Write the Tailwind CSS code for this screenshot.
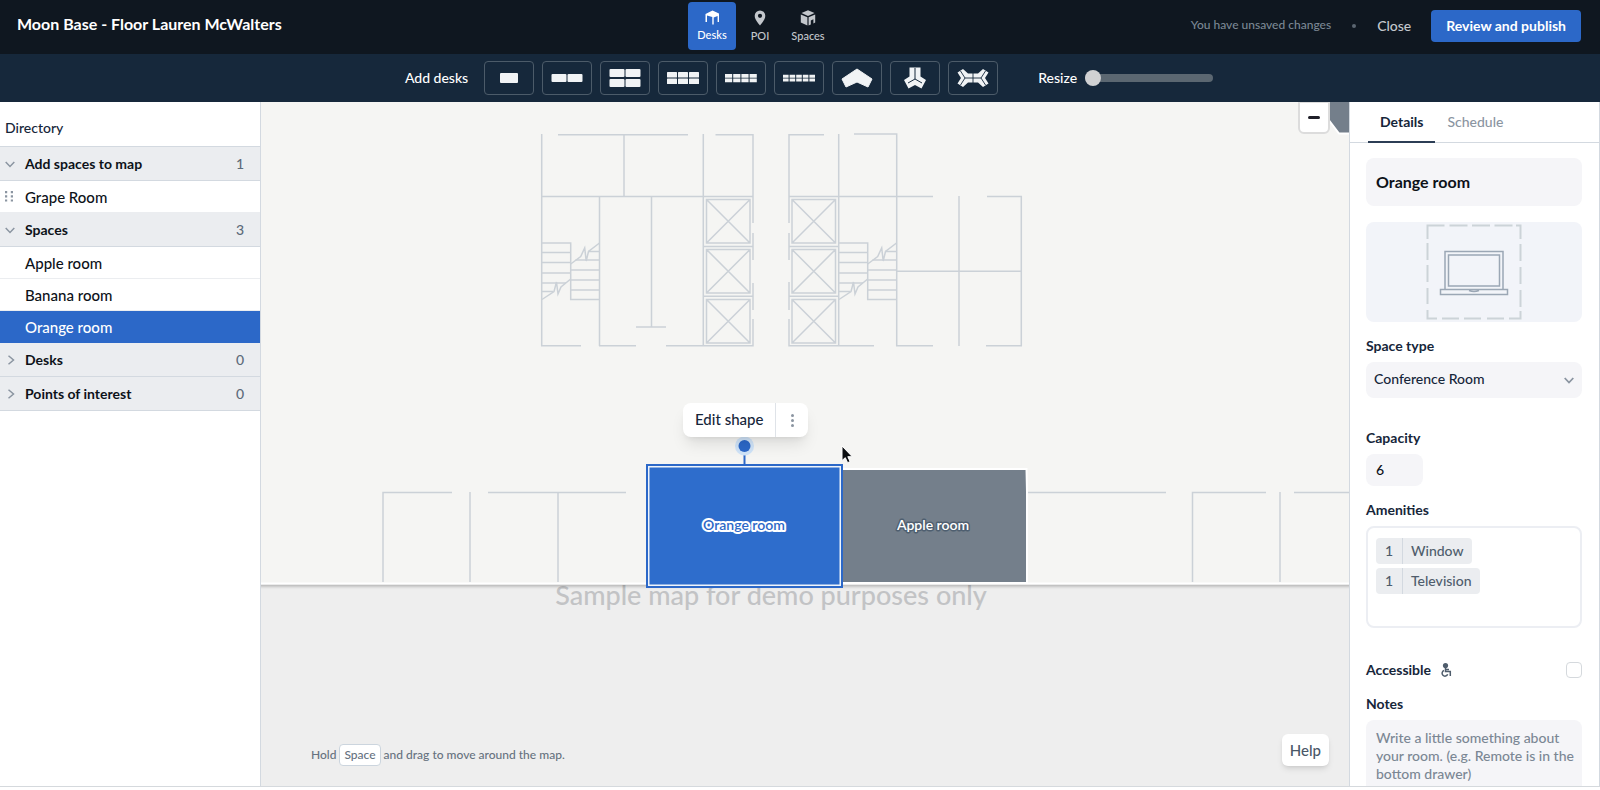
<!DOCTYPE html>
<html lang="en">
<head>
  <meta charset="UTF-8">
  <meta name="viewport" content="width=device-width, initial-scale=1">
  <title>Moon Base - Map editor</title>
  <script src="https://cdn.jsdelivr.net/npm/@tailwindcss/browser@4"></script>
</head>
<body class="h-screen flex flex-col overflow-hidden bg-white pb-[3px] font-['Lato',sans-serif] font-medium text-sm leading-5 text-[#16263a]">

<!-- Top bar -->
<header class="h-[54px] shrink-0 flex items-center bg-[#0f1720] text-white">
  <h1 class="w-[43%] pl-[17px] pb-1.5 text-base font-bold">Moon Base - Floor Lauren McWalters</h1>
  <nav class="flex pb-0.5 text-[11px] leading-4 text-[#c3c7cc]">
    <button class="w-12 h-12 rounded bg-[#2c68c8] text-white flex flex-col items-center justify-center gap-0.5">
      <svg class="w-4 h-4" viewBox="0 0 16 16" fill="currentColor"><path d="M1.500 5 8.500 1.500 15 4.500V13h-1.400V7L9.700 8.500V15.500H8.300V8L3 6.500V13H1.500z"/></svg>
      Desks
    </button>
    <button class="w-12 h-12 pt-0.5 flex flex-col items-center justify-center gap-0.5">
      <svg class="w-4 h-4" viewBox="0 0 16 16" fill="currentColor"><path fill-rule="evenodd" d="M8 .5a5.300 5.300 0 0 0-5.300 5.300C2.700 9.500 6 13 8 15.500c2-2.500 5.300-6 5.300-9.700A5.300 5.300 0 0 0 8 .5zm0 3.200a2.100 2.100 0 1 1 0 4.200 2.100 2.100 0 0 1 0-4.200z"/></svg>
      POI
    </button>
    <button class="w-12 h-12 pt-0.5 flex flex-col items-center justify-center gap-0.5">
      <svg class="w-4 h-4" viewBox="0 0 16 16" fill="currentColor"><path d="M8 .3 14.500 3 8 5.900 1.500 3zM.8 4.400 7.400 7.300v8.200L.8 12.600zM15.200 4.400v8.200l-1.800.8V9.300l-2.600 1.200v4l-2.200 1V7.300z"/></svg>
      Spaces
    </button>
  </nav>
  <div class="flex-1 flex items-center justify-end pr-[19px] pb-0.5">
    <span class="pb-0.5 text-[12px] text-[#7b8794]">You have unsaved changes</span>
    <span class="w-1 h-1 mx-[21px] rounded-full bg-[#5b6671]"></span>
    <button class="mr-5 text-[#c3c7cc]">Close</button>
    <button class="h-8 px-[15px] rounded bg-[#2c68c8] font-bold">Review and publish</button>
  </div>
</header>

<!-- Desk toolbar -->
<div class="h-12 shrink-0 pl-[18px] flex items-center justify-center bg-[#16283b] text-white">
  <span class="mr-4">Add desks</span>
  <div class="flex gap-2">
    <button aria-label="1 desk" class="w-[50px] h-[34px] rounded border border-[#4c5b69] flex items-center justify-center">
      <svg class="w-8 h-5" viewBox="0 0 32 20" fill="#f1f3f5"><rect x="7" y="5" width="18" height="10" rx="1"/></svg>
    </button>
    <button aria-label="2 desks" class="w-[50px] h-[34px] rounded border border-[#4c5b69] flex items-center justify-center">
      <svg class="w-8 h-5" viewBox="0 0 32 20" fill="#f1f3f5"><rect x="0.500" y="6" width="15" height="8" rx="1"/><rect x="16.500" y="6" width="15" height="8" rx="1"/></svg>
    </button>
    <button aria-label="4 desks" class="w-[50px] h-[34px] rounded border border-[#4c5b69] flex items-center justify-center">
      <svg class="w-8 h-5" viewBox="0 0 32 20" fill="#f1f3f5"><rect x="0.500" y="1" width="15" height="8" rx="1"/><rect x="16.500" y="1" width="15" height="8" rx="1"/><rect x="0.500" y="11" width="15" height="8" rx="1"/><rect x="16.500" y="11" width="15" height="8" rx="1"/></svg>
    </button>
    <button aria-label="6 desks" class="w-[50px] h-[34px] rounded border border-[#4c5b69] flex items-center justify-center">
      <svg class="w-8 h-5" viewBox="0 0 32 20" fill="#f1f3f5"><rect y="4" width="10" height="5.500" rx=".5"/><rect x="11" y="4" width="10" height="5.500" rx=".5"/><rect x="22" y="4" width="10" height="5.500" rx=".5"/><rect y="10.500" width="10" height="5.500" rx=".5"/><rect x="11" y="10.500" width="10" height="5.500" rx=".5"/><rect x="22" y="10.500" width="10" height="5.500" rx=".5"/></svg>
    </button>
    <button aria-label="8 desks" class="w-[50px] h-[34px] rounded border border-[#4c5b69] flex items-center justify-center">
      <svg class="w-8 h-5" viewBox="0 0 32 20" fill="none" stroke="#f1f3f5" stroke-width="3.800" stroke-dasharray="7.200 1"><path d="M0 7.800h32M0 12.400h32"/></svg>
    </button>
    <button aria-label="10 desks" class="w-[50px] h-[34px] rounded border border-[#4c5b69] flex items-center justify-center">
      <svg class="w-8 h-5" viewBox="0 0 32 20" fill="none" stroke="#f1f3f5" stroke-width="3" stroke-dasharray="5.600 1"><path d="M0 8.200h32M0 12h32"/></svg>
    </button>
    <button aria-label="Corner desk" class="w-[50px] h-[34px] rounded border border-[#4c5b69] flex items-center justify-center">
      <svg class="w-8 h-5" viewBox="0 0 32 20" fill="#f1f3f5" stroke="#f1f3f5" stroke-linejoin="round"><path d="M16 1 31 11 27 19 16 14 5 19 1 11z"/></svg>
    </button>
    <button aria-label="3 desk pod" class="w-[50px] h-[34px] rounded border border-[#4c5b69] flex items-center justify-center">
      <svg class="w-8 h-5 overflow-visible" viewBox="0 0 32 20"><path d="M10.500-.5h11v9l5.500 3.500-4.500 8.500-6.500-3.500-6.500 3.500L5 12l5.500-3.500z" fill="#f1f3f5"/><path d="M16 0v11M16 11l-7 4M16 11l7 4" stroke="#16283b" fill="none"/></svg>
    </button>
    <button aria-label="6 desk pod" class="w-[50px] h-[34px] rounded border border-[#4c5b69] flex items-center justify-center">
      <svg class="w-8 h-5" viewBox="0 0 32 20"><path d="M6 1l5 4.500h10L26 1l5.500 3.500L28 10l3.500 5.500L26 19l-5-4.500H11L6 19 .5 15.500 4 10 .5 4.500z" fill="#f1f3f5"/><path d="M3.500 3 8 10l-4.500 7M8 10h16M28.500 3 24 10l4.500 7M16 5v10" stroke="#16283b" stroke-width=".9" fill="none"/></svg>
    </button>
  </div>
  <label for="resize" class="ml-10 mr-2">Resize</label>
  <input id="resize" type="range" min="0" max="100" value="0" class="w-32 h-2 appearance-none rounded-full bg-[#5b6771] [&::-webkit-slider-thumb]:appearance-none [&::-webkit-slider-thumb]:w-4 [&::-webkit-slider-thumb]:h-4 [&::-webkit-slider-thumb]:rounded-full [&::-webkit-slider-thumb]:bg-[#d0d1d3]">
</div>

<main class="flex-1 min-h-0 flex border-b border-[#d5d9dd]">

  <!-- Directory -->
  <aside class="w-[261px] shrink-0 border-r border-[#d3d9e0] text-[15px] text-[#0d1219]">
    <h2 class="h-[45px] pl-[5px] pt-2 flex items-center border-b border-[#d3d9e0] text-sm text-[#16263a]">Directory</h2>
    <button class="w-full h-[34px] pl-[5px] pr-4 flex items-center border-b border-[#d3d9e0] bg-[#ebedf0] text-sm font-bold">
      <svg class="w-[10px] h-[10px] mr-[10px]" viewBox="0 0 10 10" fill="none" stroke="#8b95a1" stroke-width="1.500"><path d="M.7 3 5 7.500 9.300 3"/></svg>
      Add spaces to map
      <span class="ml-auto font-medium text-[#5c6b7a]">1</span>
    </button>
    <a href="#grape" class="h-8 pl-[5px] flex items-center border-b border-[#ebedf0]">
      <svg class="w-2 h-3 mr-3" viewBox="0 0 8 12" fill="#8b95a1"><path d="M0 0h2.200v2.200H0zM5.800 0H8v2.200H5.800zM0 4.200h2.200v2.200H0zM5.800 4.200H8v2.200H5.800zM0 8.400h2.200v2.200H0zM5.800 8.400H8v2.200H5.800z"/></svg>
      Grape Room
    </a>
    <button class="w-full h-[34px] pl-[5px] pr-4 flex items-center border-b border-[#d3d9e0] bg-[#ebedf0] text-sm font-bold">
      <svg class="w-[10px] h-[10px] mr-[10px]" viewBox="0 0 10 10" fill="none" stroke="#8b95a1" stroke-width="1.500"><path d="M.7 3 5 7.500 9.300 3"/></svg>
      Spaces
      <span class="ml-auto font-medium text-[#5c6b7a]">3</span>
    </button>
    <a href="#apple" class="h-8 pl-[25px] flex items-center border-b border-[#ebedf0]">Apple room</a>
    <a href="#banana" class="h-8 pl-[25px] flex items-center border-b border-[#ebedf0]">Banana room</a>
    <a href="#orange" class="h-8 pl-[25px] flex items-center bg-[#2c68c8] text-white">Orange room</a>
    <button class="w-full h-[34px] pl-[5px] pr-4 flex items-center border-b border-[#d3d9e0] bg-[#ebedf0] text-sm font-bold">
      <svg class="w-[10px] h-[10px] mr-[10px]" viewBox="0 0 10 10" fill="none" stroke="#8b95a1" stroke-width="1.500"><path d="M3.500 .7 8.500 5 3.500 9.300"/></svg>
      Desks
      <span class="ml-auto font-medium text-[#5c6b7a]">0</span>
    </button>
    <button class="w-full h-[34px] pl-[5px] pr-4 flex items-center border-b border-[#d3d9e0] bg-[#ebedf0] text-sm font-bold">
      <svg class="w-[10px] h-[10px] mr-[10px]" viewBox="0 0 10 10" fill="none" stroke="#8b95a1" stroke-width="1.500"><path d="M3.500 .7 8.500 5 3.500 9.300"/></svg>
      Points of interest
      <span class="ml-auto font-medium text-[#5c6b7a]">0</span>
    </button>
  </aside>

  <!-- Map -->
  <section class="relative flex-1 min-w-0 overflow-hidden bg-[#eeeeee]">
    <svg class="absolute inset-0 w-full h-full" viewBox="261 102 1088 684" preserveAspectRatio="xMidYMid slice">
      <defs>
        <g id="lift"><path d="M0 0h43.500v43.500H0zM0 0l43.500 43.500M43.500 0 0 43.500"/></g>
        <g id="stairs">
          <path d="M0 0h28.700v56.500h28.800M0 9.500h28.700M0 19.500h28.700M0 30h28.700M0 40h24M0 48.500h11M28.700 47h28.800M28.700 37h28.800M28.700 27h28.800M33.500 17h24M46 8.500h11.500"/>
          <path d="M0 56.500l12-8 2.500-9.500 1.500 12 3-7 9.700-8M28.700 21l10-7.500 4-8.500 1.500 13 2.300-9.500 11-8.500"/>
        </g>
        <filter id="drop" x="-5%" y="-5%" width="110%" height="110%"><feDropShadow dx="0" dy="2" stdDeviation="1.500" flood-color="#000" flood-opacity=".25"/></filter>
      </defs>

      <text x="771" y="605" text-anchor="middle" font-size="27" fill="#c2c3c5">Sample map for demo purposes only</text>
      <path d="M240 80h1130v503.500H240z" fill="#f5f5f3" stroke="#fff" stroke-width="2" filter="url(#drop)"/>

      <!-- walls -->
      <g fill="none" stroke="#cbd1d7" stroke-width="1.500">
        <path d="M541.700 134v212M558 134.700h130M624 134.700v62M703.300 134v212M715.500 134.700H753V223M753 233v27M753 283v27M753 319v26.700h-87M541.700 196.500H753M599.500 196.500V346M651.500 196.500V327M636 327h30M541 345.700h40M599 345.700h37M703 246.500h50M703 296.300h50"/>
        <path d="M824 134.700h-35V223M789 233v27M789 282v28M789 319v26.700h85M838.700 134v212M854 134h42.700v211.700H933M789 196.500h144M987 196.500h34.300v149.200H986M959 196v150M896.700 271.300h124.600M789 246.500h50M789 296.300h50"/>
        <use href="#lift" x="706.500" y="199.500"/><use href="#lift" x="706.500" y="249.500"/><use href="#lift" x="706.500" y="299.500"/>
        <use href="#lift" x="792" y="199.500"/><use href="#lift" x="792" y="249.500"/><use href="#lift" x="792" y="299.500"/>
        <use href="#stairs" x="542" y="243"/><use href="#stairs" x="839" y="243"/>
        <path d="M452 492.500h-69V582M470 492v90M488 492.500h138M558 492.500V582M1028 492.500h138M1266 492.500h-73.500V582M1280 492v90M1294 492.500h60"/>
      </g>

      <!-- rooms -->
      <path d="M1328 90v29l11 14.500h20V90z" fill="#747f8b" stroke="#fff" stroke-width="2"/>
      <path d="M842 469h184.500l.5 23v91H842z" fill="#747f8b" stroke="#fff" stroke-width="2"/>
      <path d="M744.500 446v19" stroke="#2c68c8" stroke-width="2"/>
      <circle cx="744.500" cy="446" r="9.500" fill="#cfe3f8"/>
      <circle cx="744.500" cy="446" r="6" fill="#2c68c8"/>
      <rect x="647" y="465" width="195" height="122" fill="#eef4fb" stroke="#2c68c8" stroke-width="2"/>
      <rect x="649.500" y="467.500" width="190" height="117" fill="#2e6dcc"/>
      <g text-anchor="middle" font-size="14" font-weight="600" stroke-linejoin="round" paint-order="stroke">
        <text x="744" y="530" fill="#2c68c8" stroke="#fff" stroke-width="4">Orange room</text>
        <text x="933" y="530" fill="#fff" stroke="#4f5f70" stroke-width="3">Apple room</text>
      </g>
      <path d="M842 446v14.500l3.300-2.800 2.300 5 2.500-1.100-2.300-4.900h4.500z" fill="#0b0d10" stroke="#fff"/>
    </svg>

    <div class="absolute left-[422px] top-[301px] h-[34px] flex items-center rounded-lg bg-white shadow-lg">
      <button class="h-full px-3 pb-0.5 border-r border-[#dfe3e8] text-[15px]">Edit shape</button>
      <button aria-label="More" class="w-8 h-full flex items-center justify-center">
        <svg class="w-[3px] h-[13px]" viewBox="0 0 3 13" fill="#8b95a1"><circle cx="1.500" cy="1.500" r="1.500"/><circle cx="1.500" cy="6.500" r="1.500"/><circle cx="1.500" cy="11.500" r="1.500"/></svg>
      </button>
    </div>

    <button aria-label="Zoom out" class="absolute right-[19px] top-0 w-8 h-8 rounded-b-md border-2 border-t border-[#dcdcdc] bg-white flex items-center justify-center">
      <span class="w-3 h-[3px] rounded-full bg-[#1f1f29]"></span>
    </button>

    <p class="absolute left-[50px] bottom-5 flex items-center gap-[3px] text-xs text-[#66727f]">
      Hold <kbd class="h-[22px] px-1 flex items-center rounded border border-[#ccd5de] bg-white font-['Lato',sans-serif] text-xs">Space</kbd> and drag to move around the map.
    </p>
    <button class="absolute right-5 bottom-5 h-8 px-2 rounded-md bg-white shadow-md text-[15px] text-[#4a5868]">Help</button>
  </section>

  <!-- Details -->
  <aside class="w-[251px] shrink-0 overflow-hidden border-x border-[#d3d9e0]">
    <nav class="h-[41px] pl-[18px] flex border-b border-[#d3d9e0]">
      <button class="h-[41px] px-3 border-b-2 border-[#2c3e55] font-bold">Details</button>
      <button class="h-10 px-3 text-[#8b95a1]">Schedule</button>
    </nav>
    <form class="pt-[15px] pl-4 pr-[17px] flex flex-col">
      <input aria-label="Name" type="text" value="Orange room" class="h-12 px-[10px] pb-0.5 rounded-lg bg-[#f5f5f8] text-base font-bold text-[#0d1219]">
      <div class="mt-4 h-[100px] rounded-lg bg-[#f2f4f9] flex items-center justify-center">
        <svg class="w-24 h-24" viewBox="0 0 96 96" fill="none" stroke="#9ba7b5" stroke-width="1.500">
          <path d="M19 27.500h58v38H19zM22.500 31h51v31h-51zM14.500 65.500h67v5h-67zM43 66.500q5 2 10 0"/>
          <path d="M1.500 15V1.500h17M23.500 1.500h18M46 1.500h18M68.500 1.500h18M90 1.500h4.500V15M94.500 20v17M94.500 43v17M94.500 66v17M94.500 87v7.500H83M78 94.500H61M55 94.500H38M33 94.500H16M11 94.500H1.500V86M1.500 80V64M1.500 58V41M1.500 36V19" stroke="#ccd3d8" stroke-width="2"/>
        </svg>
      </div>
      <label for="type" class="mt-4 leading-4 font-bold">Space type</label>
      <div class="relative mt-2">
        <select id="type" class="w-full h-9 px-2 pb-0.5 appearance-none rounded-lg bg-[#f5f5f8]"><option>Conference Room</option></select>
        <svg class="absolute right-2 top-3.5 w-[10px] h-[10px] pointer-events-none" viewBox="0 0 10 10" fill="none" stroke="#8b95a1" stroke-width="1.800"><path d="M.7 2 5 6.500 9.300 2"/></svg>
      </div>
      <label for="capacity" class="mt-8 leading-4 font-bold">Capacity</label>
      <input id="capacity" type="text" value="6" class="mt-2 w-[57px] h-8 px-[10px] pb-0.5 rounded-lg bg-[#f5f5f8] text-[#0d1219]">
      <h3 class="mt-4 leading-4 font-bold">Amenities</h3>
      <ul class="mt-2 min-h-[102px] px-2 py-[10px] flex flex-col items-start gap-1 rounded-lg border-2 border-[#eceef3] text-[#4f5d6c]">
        <li class="h-[26px] flex items-center rounded bg-[#ebedf0]"><span class="w-[27px] h-full flex items-center justify-center border-r border-[#d3d9e0]">1</span><span class="px-2">Window</span></li>
        <li class="h-[26px] flex items-center rounded bg-[#ebedf0]"><span class="w-[27px] h-full flex items-center justify-center border-r border-[#d3d9e0]">1</span><span class="px-2">Television</span></li>
      </ul>
      <div class="mt-8 h-5 flex items-center">
        <label for="accessible" class="font-bold">Accessible</label>
        <svg class="w-[11px] h-[14px] ml-[10px]" viewBox="0 0 11 14" fill="none" stroke="#4f5d6c" stroke-width="1.500"><circle cx="4.500" cy="2.600" r="2.600" fill="#4f5d6c" stroke="none"/><path d="M4.500 4.500v4h4.800V13M4.500 6.500H8M3 7.500a2.900 2.900 0 1 0 3.700 3.800"/></svg>
        <input id="accessible" type="checkbox" class="ml-auto w-4 h-4 appearance-none rounded-sm border border-[#d5d9dd] bg-white">
      </div>
      <label for="notes" class="mt-4 leading-4 font-bold">Notes</label>
      <textarea id="notes" class="mt-2 h-20 pl-[10px] pr-1 pt-[9px] resize-none overflow-hidden rounded-lg bg-[#f5f5f8] leading-[18px] placeholder:text-[#7b8794]" placeholder="Write a little something about your room. (e.g. Remote is in the bottom drawer)"></textarea>
    </form>
  </aside>
</main>

</body>
</html>
